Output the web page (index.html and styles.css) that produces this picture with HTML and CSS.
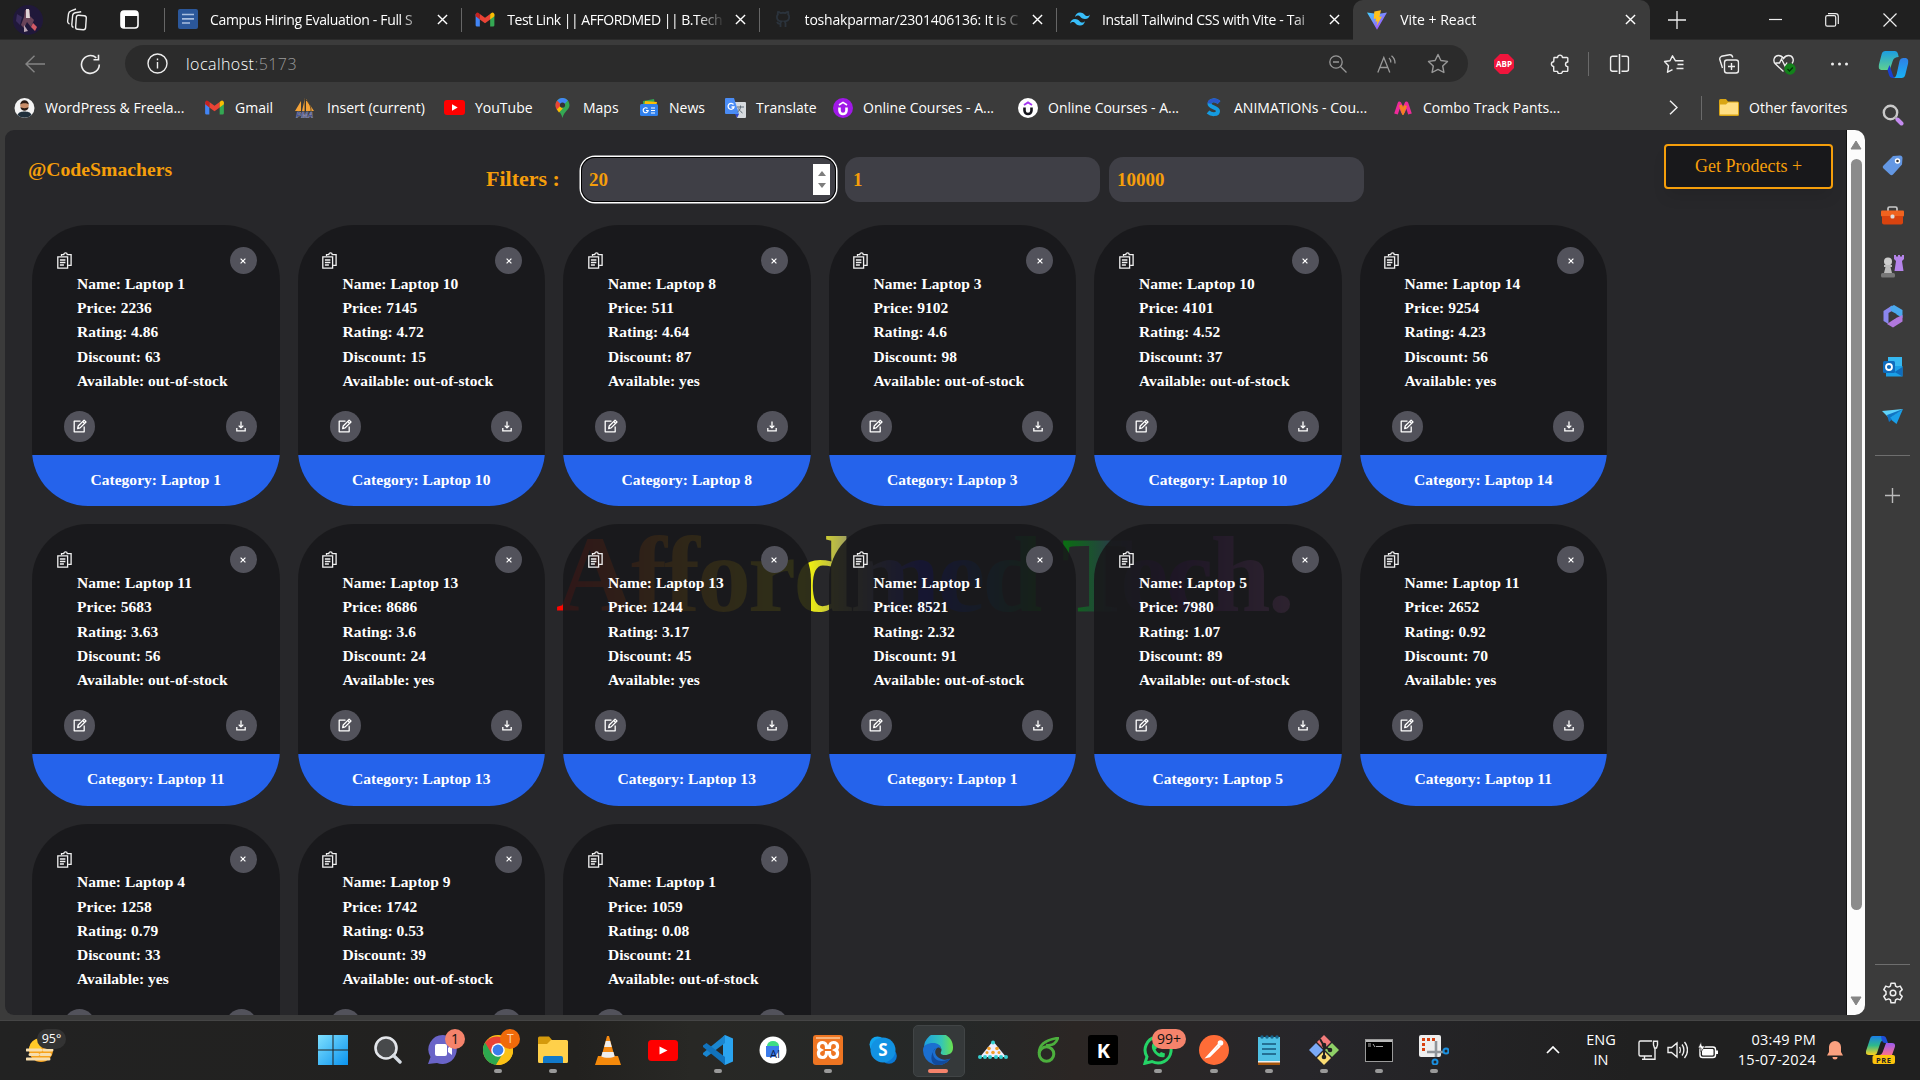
FILE: index.html
```html
<!DOCTYPE html>
<html lang="en">
<head>
<meta charset="utf-8">
<title>Vite + React</title>
<link rel="stylesheet" href="styles.css">
</head>
<body>
<svg class="defs" width="0" height="0">
  <defs>
    <linearGradient id="gVite" x1="0" y1="0" x2="1" y2="1"><stop offset="0" stop-color="#41d1ff"/><stop offset="1" stop-color="#bd34fe"/></linearGradient>
    <linearGradient id="gCop1" x1="0" y1="0" x2="0" y2="1"><stop offset="0" stop-color="#1b9de2"/><stop offset="1" stop-color="#5fd08f"/></linearGradient>
    <linearGradient id="gCop2" x1="0" y1="0" x2="0" y2="1"><stop offset="0" stop-color="#2f7fe6"/><stop offset="1" stop-color="#18b2f5"/></linearGradient>
    <linearGradient id="gWin" x1="0" y1="0" x2="1" y2="1"><stop offset="0" stop-color="#7fe0ff"/><stop offset="1" stop-color="#0a93ee"/></linearGradient>
    <linearGradient id="gEdge" x1="0" y1="0" x2="1" y2="0"><stop offset="0" stop-color="#1d9fe0"/><stop offset=".6" stop-color="#35c6b5"/><stop offset="1" stop-color="#6be34d"/></linearGradient>
    <linearGradient id="gRain" x1="0" y1="0" x2="0" y2="1"><stop offset="0" stop-color="#1a7fe8"/><stop offset=".5" stop-color="#2fb98a"/><stop offset="1" stop-color="#ffd21e"/></linearGradient>
    <linearGradient id="gPink" x1="0" y1="0" x2="0" y2="1"><stop offset="0" stop-color="#9a5bf0"/><stop offset="1" stop-color="#ff6f8a"/></linearGradient>
    <symbol id="x" viewBox="0 0 12 12"><path d="M1 1l10 10M11 1L1 11" fill="none" stroke="#fff" stroke-width="1.5"/></symbol>
    <symbol id="gmail" viewBox="0 0 20 16"><path d="M0 2v12a1.5 1.5 0 0 0 1.500 1.500H4.500V5z" fill="#4285f4"/><path d="M20 2v12a1.500 1.500 0 0 1-1.500 1.500H15.500V5z" fill="#34a853"/><path d="M4.500 8V2L10 6l5.500-4v6L10 12z" fill="#ea4335"/><path d="M0 2.500v2L4.500 8V2L3.200 1A2 2 0 0 0 0 2.500z" fill="#c5221f"/><path d="M20 2.500v2L15.500 8V2l1.300-1A2 2 0 0 1 20 2.500z" fill="#fbbc04"/></symbol>
    <symbol id="copy" viewBox="0 0 15 17"><g fill="none" stroke="#f1f1f1" stroke-width="1.300"><path d="M4.500 4V2.600h2.300a1.700 1.700 0 0 1 3.400 0h3.900v10.700h-3"/><path d="M.8 4.800h9.800v11.400H.8z"/><path d="M2.900 8h5.500M2.900 10.500h5.500M2.900 13h4"/></g></symbol>
    <symbol id="cx" viewBox="0 0 8 8"><path d="M1.600 1.600l4.800 4.800M6.400 1.600L1.600 6.400" fill="none" stroke="#fff" stroke-width="1.200"/></symbol>
    <symbol id="edit" viewBox="0 0 14 14"><g fill="none" stroke="#fff" stroke-width="1.300" stroke-linejoin="round"><path d="M7.500 2.200H1.200v10.600h10V7.500"/><path d="M4.700 9.500l.5-2.500 5.900-5.900 1.900 1.900-5.900 5.900z"/><path d="M9.700 2.500l1.900 1.900"/></g></symbol>
    <symbol id="down" viewBox="0 0 10 11"><g fill="none" stroke="#fff" stroke-width="1.300"><path d="M5 .5v6.300M2.700 4.600L5 6.900l2.300-2.300M.8 7v2.900h8.400V7"/></g></symbol>
    <symbol id="udemy" viewBox="0 0 20 20"><path d="M6.500 9.500v3a3.500 3.500 0 0 0 7 0v-3" fill="none" stroke="currentColor" stroke-width="2.600"/></symbol>
  </defs>
</svg>

<header class="tabs">
  <div class="tabs-lead">
    <svg width="30" height="30" viewBox="0 0 30 30"><circle cx="15" cy="15" r="15" fill="#20183a"/><path d="M12 5h5v6l4 4-3 7-4-5-3 6-3-3 3-8z" fill="#6a4459"/><path d="M13 4h3l1 9h-4z" fill="#dfd3d6"/><path d="M20 18l4 4-2 4-4-4z" fill="#d35a66"/><path d="M11 20l4 6-4 1z" fill="#b9a6b4"/><path d="M4 9l5 3-2 8-4-4z" fill="#3a2c5c"/></svg>
    <svg class="workspaces" width="22" height="24" viewBox="0 0 22 24" fill="none" stroke="#eee" stroke-width="1.400"><rect x="10" y="7.500" width="10" height="14" rx="2.200" transform="rotate(4 15 14)"/><path d="M7.500 19.500c-1.500-.5-1.800-1.300-1.700-2.700l.8-9c.2-2 1-2.700 2.600-3l6-1.100M3.500 16c-1.500-.5-2-1.300-1.900-2.700l.9-7.500c.2-2 1-2.500 2.600-3L10 1"/></svg>
    <svg width="19" height="19" viewBox="0 0 19 19"><rect x="1" y="1" width="17" height="17" rx="3" fill="none" stroke="#fff" stroke-width="1.600"/><path d="M1 4a3 3 0 0 1 3-3h11a3 3 0 0 1 3 3v2H1zM1 6h4v12H3a2 2 0 0 1-2-2z" fill="#fff"/></svg>
  </div>
  <div class="tab">
    <svg width="20" height="20" viewBox="0 0 20 20"><rect width="20" height="20" rx="2" fill="#2b579a"/><path d="M4 5.500h12M4 9.800h12M4 14h8" stroke="#a9bfe0" stroke-width="1.700"/></svg>
    <span class="tab-title">Campus Hiring Evaluation - Full S</span><svg class="tab-x"><use href="#x"/></svg>
  </div>
  <div class="tab">
    <svg width="19" height="15"><use href="#gmail"/></svg>
    <span class="tab-title t2">Test Link || AFFORDMED || B.Tech</span><svg class="tab-x"><use href="#x"/></svg>
  </div>
  <div class="tab">
    <svg width="20" height="20" viewBox="0 0 20 20"><path d="M7.500 18v-3.200c-2 .3-3-.8-3.500-1.800M12.500 18v-3.500c0-1-.3-1.500-.8-2 2.500-.3 4.500-1.200 4.500-4.500 0-1-.3-1.800-1-2.500.2-.6.200-1.600-.1-2.500-1 0-2 .6-2.700 1.100a9 9 0 0 0-4.800 0C7 3.600 5.900 3 5 3c-.4.900-.3 1.900-.1 2.500-.7.700-1 1.500-1 2.500 0 3.300 2 4.200 4.500 4.500-.4.400-.8 1-.9 1.800" fill="none" stroke="#2b333c" stroke-width="1.800"/></svg>
    <span class="tab-title t3">toshakparmar/2301406136: It is C</span><svg class="tab-x"><use href="#x"/></svg>
  </div>
  <div class="tab">
    <svg width="20" height="14" viewBox="0 0 20 14"><path d="M5 5C5.700 2 7.300.5 10 .5c4 0 4.500 3 6.500 3.500 1.300.3 2.500-.2 3.500-1.500-.7 3-2.300 4.500-5 4.500-4 0-4.500-3-6.500-3.500C7.200 3.200 6 3.700 5 5zM0 11.500C.7 8.500 2.300 7 5 7c4 0 4.500 3 6.500 3.500 1.300.3 2.500-.2 3.500-1.500-.7 3-2.300 4.500-5 4.500-4 0-4.500-3-6.500-3.500-1.300-.3-2.500.2-3.500 1.500z" fill="#38bdf8"/></svg>
    <span class="tab-title t4">Install Tailwind CSS with Vite - Tai</span><svg class="tab-x"><use href="#x"/></svg>
  </div>
  <div class="tab active">
    <svg width="20" height="20" viewBox="0 0 20 20"><path d="M0 2.500l10 17.200L20 2.500l-9 1.500z" fill="url(#gVite)"/><path d="M14 .3L7.300 1.600 6.800 9l2.300-.5-.6 3.200 2-.5-1 4.800L15 6.500l-2.600.5z" fill="#ffc21d"/></svg>
    <span class="tab-title">Vite + React</span><svg class="tab-x"><use href="#x"/></svg>
  </div>
  <div class="window-controls">
    <svg width="18" height="18" viewBox="0 0 18 18" stroke="#eee" stroke-width="1.300"><path d="M9 0v18M0 9h18"/></svg>
    <svg width="13" height="13" viewBox="0 0 13 13" stroke="#eee" stroke-width="1.200"><path d="M0 6.500h13"/></svg>
    <svg width="14" height="14" viewBox="0 0 14 14" fill="none" stroke="#eee" stroke-width="1.200"><rect x=".7" y="2.700" width="10" height="10.500" rx="1.500"/><path d="M3 .7h7.500a2.800 2.800 0 0 1 2.800 2.800V11"/></svg>
    <svg width="14" height="14" viewBox="0 0 14 14" stroke="#eee" stroke-width="1.200"><path d="M.5.500l13 13M13.500.500l-13 13"/></svg>
  </div>
</header>

<nav class="toolbar">
  <span class="slot"><svg width="20" height="18" viewBox="0 0 20 18" fill="none" stroke="#858585" stroke-width="1.400"><path d="M20 9H1M9.500.7L1 9l8.500 8.300"/></svg></span>
  <span class="slot"><svg width="21" height="21" viewBox="0 0 21 21" fill="none" stroke="#eee" stroke-width="1.600"><path d="M19.300 10.500a8.900 8.900 0 1 1-3-6.700M18.500.8v5h-5"/></svg></span>
  <div class="omnibox">
    <svg width="21" height="21" viewBox="0 0 21 21" fill="none" stroke="#eee" stroke-width="1.400"><circle cx="10.500" cy="10.500" r="9.500"/><path d="M10.500 9v6.500M10.500 5.500v1.800"/></svg>
    <span class="url">localhost<span class="port">:5173</span></span>
    <svg class="oi" width="18" height="18" viewBox="0 0 18 18" fill="none" stroke="#999" stroke-width="1.300"><circle cx="7" cy="7" r="6.200"/><path d="M11.500 11.500l6 6M4 7h6"/></svg>
    <svg class="oi" width="20" height="18" viewBox="0 0 20 18" fill="none" stroke="#999" stroke-width="1.300"><path d="M.8 17.500L6.800 2.500l6 15M3 12.500h7.600M12 3c1.300 1 1.800 2.500 1.800 4.500M14.500.8c2.500 2 3.600 4.500 3.500 7.700"/></svg>
    <svg class="oi" width="22" height="21" viewBox="0 0 22 21" fill="none" stroke="#999" stroke-width="1.400" stroke-linejoin="round"><path d="M11 1.500l2.900 6 6.600.9-4.800 4.600 1.200 6.500L11 16.400l-5.900 3.100L6.300 13 1.500 8.400l6.600-.9z"/></svg>
  </div>
  <span class="slot"><svg width="20" height="20" viewBox="0 0 20 20"><path d="M6 0h8l6 6v8l-6 6H6l-6-6V6z" fill="#f0153c"/><text class="abp" x="10" y="13.200" text-anchor="middle">ABP</text></svg></span>
  <span class="slot"><svg width="20" height="20" viewBox="0 0 20 20" fill="none" stroke="#eee" stroke-width="1.400" stroke-linejoin="round"><path d="M4 3.500h3.600a2.400 2.400 0 0 1 4.800 0H17a.8.800 0 0 1 .8.800V8a2.300 2.300 0 0 0 0 4.600v4a.8.800 0 0 1-.8.800h-4.600a2.400 2.400 0 0 1-4.800 0H4.500a.8.800 0 0 1-.8-.8v-4.200a2.300 2.300 0 0 1 0-4.600z"/></svg></span>
  <i class="vsep"></i>
  <span class="slot"><svg width="20" height="20" viewBox="0 0 20 20" fill="none" stroke="#eee" stroke-width="1.500"><path d="M8 2.200H3A2 2 0 0 0 1 4.200v11a2 2 0 0 0 2 2h5M12 2.200h5a2 2 0 0 1 2 2v11a2 2 0 0 1-2 2h-5M10 0v20"/></svg></span>
  <span class="slot"><svg width="21" height="19" viewBox="0 0 21 19" fill="none" stroke="#eee" stroke-width="1.400" stroke-linejoin="round"><path d="M20 13.500h-7M20 9.500h-6M20 5.800h-8l-3-5-2.500 5L1 6.500l4 4.200-1 6.500 5-2.600"/></svg></span>
  <span class="slot"><svg width="21" height="20" viewBox="0 0 21 20" fill="none" stroke="#eee" stroke-width="1.400"><rect x="6" y="6" width="14" height="13" rx="2.500"/><path d="M13 9v7M9.500 12.500h7M4 14L1.300 5.500C1 3.500 1.500 2.800 3 2.300l8-1.500c2-.3 2.800 1 3.300 2.700"/></svg></span>
  <span class="slot"><svg width="24" height="21" viewBox="0 0 24 21" fill="none" stroke="#eee" stroke-width="1.400"><path d="M11 17.500L3 10C0 7 1.500 1.500 6 1.500c2.500 0 4 1.500 5 3 1-1.500 2.500-3 5-3 4.500 0 6 5 3.500 8M3 9h4l2-4 3.500 7 2-3.500"/><circle cx="17.500" cy="15" r="5.700" fill="#13821b" stroke="none"/><path d="M15 15l2 2 3.300-3.500" stroke="#05330a"/></svg></span>
  <span class="slot"><svg width="18" height="4" viewBox="0 0 18 4" fill="#eee"><circle cx="2" cy="2" r="1.500"/><circle cx="9" cy="2" r="1.500"/><circle cx="16" cy="2" r="1.500"/></svg></span>
  <span class="slot"><svg width="30" height="27" viewBox="0 0 30 27"><path d="M7 0h9c2 0 3 1 3.500 3l.7 3c-3 0-5 1-6 4l-3 9H4c-3 0-4.500-2-3.700-5L3.200 3C3.700 1 5 0 7 0z" fill="url(#gCop1)"/><path d="M9 19l2-5 3 9c.5 2 1.500 4 3.500 4h-3c-2 0-3.500-1-4-3z" fill="#1a3fd0"/><path d="M23 27h-9c3 0 3.500-2 4.300-4.500L21 10c.6-2 2-3 4-3h1c3 0 4.500 2 3.700 5l-3 12c-.5 2-1.700 3-3.700 3z" fill="url(#gCop2)"/></svg></span>
</nav>

<div class="middle">
  <div class="window">
    <div class="bookmarks">
      <span class="bm"><svg width="21" height="20" viewBox="0 0 20 20"><circle cx="10" cy="10" r="10" fill="#f4f4f4"/><path d="M3 17c1-3 4-3.500 7-3.500s6 .5 7 3.500a10 10 0 0 1-14 0z" fill="#20303c"/><circle cx="10" cy="7.500" r="4.300" fill="#c98d68"/><path d="M5.700 6.500a4.300 4.300 0 0 1 8.600 0c-2-1.800-6.500-1.800-8.600 0zM6 9c1 1.500 7 1.500 8 0 0 5-8 5-8 0z" fill="#2b1b14"/></svg>WordPress &amp; Freela...</span>
      <span class="bm"><svg width="21" height="15"><use href="#gmail"/></svg>Gmail</span>
      <span class="bm wide"><svg width="21" height="20" viewBox="0 0 21 20"><path d="M1 13L7 3v10zM8 13L11 0v13zM12 13V1l8 12z" fill="#f5a338"/><path d="M11 1v12M12 2c4 4 5 7 5 11" stroke="#3a3020" stroke-width=".8" fill="none"/><text class="pma" x="10.500" y="19.500" text-anchor="middle">PMA</text></svg>Insert (current)</span>
      <span class="bm"><svg width="21" height="15" viewBox="0 0 21 15"><rect width="21" height="15" rx="3" fill="#f00"/><path d="M8 4.200v6.600l5.700-3.300z" fill="#fff"/></svg>YouTube</span>
      <span class="bm"><svg width="21" height="20" viewBox="0 0 21 20"><path d="M10.500 0a7 7 0 0 1 7 7c0 5-5.500 6-7 13-1.500-7-7-8-7-13a7 7 0 0 1 7-7z" fill="#34a853"/><path d="M3.500 7a7 7 0 0 1 1.700-4.600L10 7l-5 5c-1-1.500-1.500-3-1.500-5z" fill="#ea4335"/><path d="M5.200 2.400a7 7 0 0 1 10.600 0L10.500 8z" fill="#4285f4"/><path d="M4.800 11.500l3-3 3 2-3.800 4z" fill="#fbbc04"/><circle cx="10.500" cy="7" r="2.600" fill="#333"/></svg>Maps</span>
      <span class="bm"><svg width="20" height="18" viewBox="0 0 20 18"><path d="M4 2l11-2 1 6H4z" fill="#34a853"/><path d="M6 2l12 1-1 5H5z" fill="#fbbc04"/><rect x="1" y="5" width="18" height="12" rx="1.500" fill="#2f80ed"/><path d="M12 9h4M12 11.500h4M12 14h4" stroke="#fff"/><path d="M8.500 9.500a2.500 2.500 0 1 0 .7 2H7" stroke="#fff" stroke-width="1.200" fill="none"/></svg>News</span>
      <span class="bm"><svg width="21" height="20" viewBox="0 0 21 20"><path d="M8 4h12a1 1 0 0 1 1 1v14a1 1 0 0 1-1 1h-8z" fill="#d6dade"/><path d="M1 0h8l5 16H1a1 1 0 0 1-1-1V1a1 1 0 0 1 1-1z" fill="#4a8cf5"/><path d="M8.500 6.500A3 3 0 1 0 9 9H6.500" stroke="#fff" stroke-width="1.300" fill="none"/><path d="M12 9h7M15.500 7.500V9c0 3-3 5-3 5M13.500 10.500c1 2.500 4 4.500 4 4.500" stroke="#5d6b76" fill="none"/><path d="M10 16h4l-2 4z" fill="#3046c8"/></svg>Translate</span>
      <span class="bm"><svg width="20" height="20" viewBox="0 0 20 20" color="#fff"><circle cx="10" cy="10" r="10" fill="#a018e8"/><path d="M6 7l4-2.600L14 7" fill="none" stroke="#fff" stroke-width="1.600"/><use href="#udemy"/></svg>Online Courses - A...</span>
      <span class="bm"><svg width="20" height="20" viewBox="0 0 20 20" color="#15151c"><circle cx="10" cy="10" r="10" fill="#fff"/><path d="M6 7l4-2.600L14 7" fill="none" stroke="#a435f0" stroke-width="1.800"/><use href="#udemy"/></svg>Online Courses - A...</span>
      <span class="bm"><svg width="21" height="19" viewBox="0 0 21 19"><path d="M16 4.500C13 1.500 7 1.500 6.500 5.500S15 9 15 13s-6.500 4-10 1" fill="none" stroke="#159be0" stroke-width="4"/><path d="M16 4.500C13 1.500 7 1.500 6.500 5.500" fill="none" stroke="#2a56c8" stroke-width="4"/></svg>ANIMATIONs - Cou...</span>
      <span class="bm"><svg width="20" height="14" viewBox="0 0 20 14"><path d="M3 13L6.500 2.500 10 11l3.500-8.500L17 13" fill="none" stroke="#ee2a9a" stroke-width="3.800" stroke-linejoin="round"/><path d="M7.500 4L10 11l2.500-6.500" fill="none" stroke="#f58220" stroke-width="3.200"/></svg>Combo Track Pants...</span>
      <svg class="chev" width="9" height="15" viewBox="0 0 9 15"><path d="M1 .7l7 6.800-7 6.800" fill="none" stroke="#eee" stroke-width="1.500"/></svg>
      <i class="vsep"></i>
      <span class="bm other"><svg width="20" height="17" viewBox="0 0 20 17"><path d="M0 1.500A1.500 1.500 0 0 1 1.500 0H7l2 2.500h9.500A1.500 1.500 0 0 1 20 4v11.500a1.500 1.500 0 0 1-1.500 1.500h-17A1.500 1.500 0 0 1 0 15.500z" fill="#d9a514"/><path d="M1 5.500h6l2-2h10v12H1z" fill="#ffdf84"/></svg>Other favorites</span>
    </div>
    <div class="frame">
      <main class="page">
        <div class="hero">Affordmed Tech.</div>
        <header class="page-head">
          <h1 class="brand">@CodeSmachers</h1>
          <div class="filters">
            <span class="filters-label">Filters :</span>
            <div class="field focused">20<span class="spinner"><svg width="8" height="5" viewBox="0 0 8 5"><path d="M4 0l4 5H0z" fill="#7d7d7d"/></svg><svg width="8" height="5" viewBox="0 0 8 5"><path d="M4 5L0 0h8z" fill="#7d7d7d"/></svg></span></div>
            <div class="field">1</div>
            <div class="field">10000</div>
          </div>
          <button class="get">Get Prodects +</button>
        </header>
        <section class="cards">
          <article class="card"><div class="body"><div class="top"><svg class="copy"><use href="#copy"/></svg><span class="dot sm"><svg><use href="#cx"/></svg></span></div><ul><li>Name: Laptop 1</li><li>Price: 2236</li><li>Rating: 4.86</li><li>Discount: 63</li><li>Available: out-of-stock</li></ul><div class="acts"><span class="dot ed"><svg><use href="#edit"/></svg></span><span class="dot dl"><svg><use href="#down"/></svg></span></div></div><footer>Category: Laptop 1</footer></article>
          <article class="card"><div class="body"><div class="top"><svg class="copy"><use href="#copy"/></svg><span class="dot sm"><svg><use href="#cx"/></svg></span></div><ul><li>Name: Laptop 10</li><li>Price: 7145</li><li>Rating: 4.72</li><li>Discount: 15</li><li>Available: out-of-stock</li></ul><div class="acts"><span class="dot ed"><svg><use href="#edit"/></svg></span><span class="dot dl"><svg><use href="#down"/></svg></span></div></div><footer>Category: Laptop 10</footer></article>
          <article class="card"><div class="body"><div class="top"><svg class="copy"><use href="#copy"/></svg><span class="dot sm"><svg><use href="#cx"/></svg></span></div><ul><li>Name: Laptop 8</li><li>Price: 511</li><li>Rating: 4.64</li><li>Discount: 87</li><li>Available: yes</li></ul><div class="acts"><span class="dot ed"><svg><use href="#edit"/></svg></span><span class="dot dl"><svg><use href="#down"/></svg></span></div></div><footer>Category: Laptop 8</footer></article>
          <article class="card"><div class="body"><div class="top"><svg class="copy"><use href="#copy"/></svg><span class="dot sm"><svg><use href="#cx"/></svg></span></div><ul><li>Name: Laptop 3</li><li>Price: 9102</li><li>Rating: 4.6</li><li>Discount: 98</li><li>Available: out-of-stock</li></ul><div class="acts"><span class="dot ed"><svg><use href="#edit"/></svg></span><span class="dot dl"><svg><use href="#down"/></svg></span></div></div><footer>Category: Laptop 3</footer></article>
          <article class="card"><div class="body"><div class="top"><svg class="copy"><use href="#copy"/></svg><span class="dot sm"><svg><use href="#cx"/></svg></span></div><ul><li>Name: Laptop 10</li><li>Price: 4101</li><li>Rating: 4.52</li><li>Discount: 37</li><li>Available: out-of-stock</li></ul><div class="acts"><span class="dot ed"><svg><use href="#edit"/></svg></span><span class="dot dl"><svg><use href="#down"/></svg></span></div></div><footer>Category: Laptop 10</footer></article>
          <article class="card"><div class="body"><div class="top"><svg class="copy"><use href="#copy"/></svg><span class="dot sm"><svg><use href="#cx"/></svg></span></div><ul><li>Name: Laptop 14</li><li>Price: 9254</li><li>Rating: 4.23</li><li>Discount: 56</li><li>Available: yes</li></ul><div class="acts"><span class="dot ed"><svg><use href="#edit"/></svg></span><span class="dot dl"><svg><use href="#down"/></svg></span></div></div><footer>Category: Laptop 14</footer></article>
          <article class="card"><div class="body"><div class="top"><svg class="copy"><use href="#copy"/></svg><span class="dot sm"><svg><use href="#cx"/></svg></span></div><ul><li>Name: Laptop 11</li><li>Price: 5683</li><li>Rating: 3.63</li><li>Discount: 56</li><li>Available: out-of-stock</li></ul><div class="acts"><span class="dot ed"><svg><use href="#edit"/></svg></span><span class="dot dl"><svg><use href="#down"/></svg></span></div></div><footer>Category: Laptop 11</footer></article>
          <article class="card"><div class="body"><div class="top"><svg class="copy"><use href="#copy"/></svg><span class="dot sm"><svg><use href="#cx"/></svg></span></div><ul><li>Name: Laptop 13</li><li>Price: 8686</li><li>Rating: 3.6</li><li>Discount: 24</li><li>Available: yes</li></ul><div class="acts"><span class="dot ed"><svg><use href="#edit"/></svg></span><span class="dot dl"><svg><use href="#down"/></svg></span></div></div><footer>Category: Laptop 13</footer></article>
          <article class="card"><div class="body"><div class="top"><svg class="copy"><use href="#copy"/></svg><span class="dot sm"><svg><use href="#cx"/></svg></span></div><ul><li>Name: Laptop 13</li><li>Price: 1244</li><li>Rating: 3.17</li><li>Discount: 45</li><li>Available: yes</li></ul><div class="acts"><span class="dot ed"><svg><use href="#edit"/></svg></span><span class="dot dl"><svg><use href="#down"/></svg></span></div></div><footer>Category: Laptop 13</footer></article>
          <article class="card"><div class="body"><div class="top"><svg class="copy"><use href="#copy"/></svg><span class="dot sm"><svg><use href="#cx"/></svg></span></div><ul><li>Name: Laptop 1</li><li>Price: 8521</li><li>Rating: 2.32</li><li>Discount: 91</li><li>Available: out-of-stock</li></ul><div class="acts"><span class="dot ed"><svg><use href="#edit"/></svg></span><span class="dot dl"><svg><use href="#down"/></svg></span></div></div><footer>Category: Laptop 1</footer></article>
          <article class="card"><div class="body"><div class="top"><svg class="copy"><use href="#copy"/></svg><span class="dot sm"><svg><use href="#cx"/></svg></span></div><ul><li>Name: Laptop 5</li><li>Price: 7980</li><li>Rating: 1.07</li><li>Discount: 89</li><li>Available: out-of-stock</li></ul><div class="acts"><span class="dot ed"><svg><use href="#edit"/></svg></span><span class="dot dl"><svg><use href="#down"/></svg></span></div></div><footer>Category: Laptop 5</footer></article>
          <article class="card"><div class="body"><div class="top"><svg class="copy"><use href="#copy"/></svg><span class="dot sm"><svg><use href="#cx"/></svg></span></div><ul><li>Name: Laptop 11</li><li>Price: 2652</li><li>Rating: 0.92</li><li>Discount: 70</li><li>Available: yes</li></ul><div class="acts"><span class="dot ed"><svg><use href="#edit"/></svg></span><span class="dot dl"><svg><use href="#down"/></svg></span></div></div><footer>Category: Laptop 11</footer></article>
          <article class="card"><div class="body"><div class="top"><svg class="copy"><use href="#copy"/></svg><span class="dot sm"><svg><use href="#cx"/></svg></span></div><ul><li>Name: Laptop 4</li><li>Price: 1258</li><li>Rating: 0.79</li><li>Discount: 33</li><li>Available: yes</li></ul><div class="acts"><span class="dot ed"></span><span class="dot dl"></span></div></div></article>
          <article class="card"><div class="body"><div class="top"><svg class="copy"><use href="#copy"/></svg><span class="dot sm"><svg><use href="#cx"/></svg></span></div><ul><li>Name: Laptop 9</li><li>Price: 1742</li><li>Rating: 0.53</li><li>Discount: 39</li><li>Available: out-of-stock</li></ul><div class="acts"><span class="dot ed"></span><span class="dot dl"></span></div></div></article>
          <article class="card"><div class="body"><div class="top"><svg class="copy"><use href="#copy"/></svg><span class="dot sm"><svg><use href="#cx"/></svg></span></div><ul><li>Name: Laptop 1</li><li>Price: 1059</li><li>Rating: 0.08</li><li>Discount: 21</li><li>Available: out-of-stock</li></ul><div class="acts"><span class="dot ed"></span><span class="dot dl"></span></div></div></article>
        </section>
      </main>
      <div class="scrollbar">
        <svg width="12" height="10" viewBox="0 0 12 10"><path d="M6 1l5 8H1z" fill="#858585" stroke="#858585" stroke-linejoin="round"/></svg>
        <div class="thumb"></div>
        <svg width="12" height="10" viewBox="0 0 12 10"><path d="M6 9L1 1h10z" fill="#858585" stroke="#858585" stroke-linejoin="round"/></svg>
      </div>
    </div>
  </div>
  <aside class="sidebar">
    <span><svg width="22" height="22" viewBox="0 0 22 22" fill="none"><circle cx="8.500" cy="8.500" r="6.700" stroke="#c9c9c9" stroke-width="2.400"/><path d="M13 13l2.500 2.500" stroke="#aaa" stroke-width="2"/><path d="M15.500 15.500l4 4" stroke="#c48bf0" stroke-width="4" stroke-linecap="round"/></svg></span>
    <span><svg width="21" height="21" viewBox="0 0 21 21"><path d="M11 1l7-.5c1.500 0 2.500 1 2.500 2.500L20 9.500 11 19.500c-1 1-2 1-3 0l-6.500-6c-1-1-1-2 0-3z" fill="#6397e3"/><circle cx="15.500" cy="6" r="2" fill="#333" stroke="#fff" stroke-width="1.400"/></svg></span>
    <span><svg width="23" height="19" viewBox="0 0 23 19"><path d="M7 5V2.500c0-1 .5-1.500 1.500-1.500h6c1 0 1.500.5 1.500 1.500V5" fill="none" stroke="#c9c9c9" stroke-width="1.700"/><rect x="0" y="4.500" width="23" height="6" rx="1" fill="#f0631f"/><path d="M1 10h21v6.500a2 2 0 0 1-2 2H3a2 2 0 0 1-2-2z" fill="#d8430f"/><rect x="9.500" y="8.500" width="4" height="4" rx="1.500" fill="#ddd"/></svg></span>
    <span><svg width="23" height="23" viewBox="0 0 23 23"><path d="M13 0h2v1.500h2V0h2v1.500h2V0h2v4l-2 2 1.500 10h-9L15 6l-2-2z" fill="#b584ea"/><circle cx="7" cy="6.500" r="4" fill="#ccc"/><path d="M3 10h8v2H9.500l1.500 6H3l1.500-6H3z" fill="#bbb"/><rect x="0" y="18" width="14" height="4.500" rx="1.500" fill="#777"/></svg></span>
    <span><svg width="22" height="23" viewBox="0 0 22 23"><path d="M10 .5L1.500 6v10l5 3V8l5-3z" fill="#8a86ee"/><path d="M8 2l4-2 8.500 5v8l-6-3.500V9L9 6z" fill="#4aa9ee"/><path d="M20.500 10v6.500L11 22.500 5 19l9-6z" fill="#b178dd"/><circle cx="11" cy="11.300" r="3" fill="#3b3b3b"/></svg></span>
    <span><svg width="20" height="20" viewBox="0 0 20 20"><rect x="5" y="0" width="14" height="12" fill="#35b8f1"/><path d="M3 19.500V9h16.500v10.500z" fill="#1aa0e8"/><path d="M19.500 10l-8 5 8 4.500z" fill="#0f6cbd"/><rect x="0" y="4" width="12" height="12" rx="1.500" fill="#0f6cbd"/><circle cx="6" cy="10" r="3" fill="none" stroke="#fff" stroke-width="1.800"/></svg></span>
    <span><svg width="21" height="15" viewBox="0 0 21 15"><path d="M0 2L21 0 7 9z" fill="#5fd3fa"/><path d="M21 0L14.500 15 7 9z" fill="#1a9fe8"/><path d="M5 6l2 7 3-2.500L8 8.500 21 0z" fill="#0f74c4"/></svg></span>
    <i class="hsep"></i>
    <span class="plus"><svg width="15" height="15" viewBox="0 0 15 15" stroke="#bbb" stroke-width="1.400"><path d="M7.500 0v15M0 7.500h15"/></svg></span>
    <i class="hsep low"></i>
    <span class="gear"><svg width="22" height="22" viewBox="0 0 22 22" fill="none" stroke="#eee" stroke-width="1.500" stroke-linejoin="round"><path d="M9 1.200h4l.6 2.900 1.700 1 2.900-1 2 3.500-2.200 2v2.800l2.200 2-2 3.500-2.900-1-1.700 1-.6 2.900H9l-.6-2.900-1.700-1-2.900 1-2-3.500 2.200-2V9.600l-2.200-2 2-3.500 2.900 1 1.700-1z"/><circle cx="11" cy="11" r="2.800"/></svg></span>
  </aside>
</div>

<footer class="taskbar">
  <div class="weather"><svg width="28" height="28" viewBox="0 0 28 28"><circle cx="15" cy="14" r="12" fill="#f7a21b"/><path d="M15 2a12 12 0 0 0-12 12h12z" fill="#ffc928"/><path d="M1 14h14M18 14h8M4 18.500h8M15 18.500h9M1 23h22" stroke="#f7deae" stroke-width="3" stroke-linecap="round"/></svg><span class="temp">95°</span></div>
  <div class="apps">
    <span class="app"><svg width="30" height="30" viewBox="0 0 29 29"><path d="M0 0h14v14H0zM15 0h14v14H15zM0 15h14v14H0zM15 15h14v14H15z" fill="url(#gWin)"/></svg></span>
    <span class="app"><svg width="28" height="28" viewBox="0 0 28 28"><circle cx="12" cy="12" r="10.500" fill="#47494b" stroke="#e3e6ea" stroke-width="2.600"/><path d="M19.500 19.500l6.500 6.500" stroke="#d5dbe2" stroke-width="3.400" stroke-linecap="round"/></svg></span>
    <span class="app"><svg width="30" height="30" viewBox="0 0 30 30"><path d="M15 0a14.500 14.500 0 1 1-6 28L0 29l2.500-7A14.500 14.500 0 0 1 15 0z" fill="#6a64c8"/><rect x="7" y="9" width="12" height="12" rx="2" fill="#fff"/><path d="M20 13l4-3v10l-4-3z" fill="#fff"/></svg><b class="badge">1</b></span>
    <span class="app run"><svg width="30" height="30" viewBox="0 0 30 30"><circle cx="15" cy="15" r="15" fill="#fbc116"/><path d="M15 15L2 7.500a15 15 0 0 0 11 22.400l6-10z" fill="#2da94f"/><path d="M15 15H29a15 15 0 0 0-27-7.500l6.500 11z" fill="#e94235"/><path d="M15 8h13.300A15 15 0 0 1 13 29.900l7-11z" fill="#fbc116"/><circle cx="15" cy="15" r="6.800" fill="#fff"/><circle cx="15" cy="15" r="5.400" fill="#3b7de9"/></svg><b class="badge t">T</b></span>
    <span class="app run"><svg width="30" height="28" viewBox="0 0 30 28"><path d="M0 2a1.500 1.500 0 0 1 1.500-1.500H11L14 4v6H0z" fill="#d49a0c"/><path d="M0 8h9l4-4h15.500A1.500 1.500 0 0 1 30 5.500v20a1.500 1.500 0 0 1-1.500 1.500h-27A1.500 1.500 0 0 1 0 25.500z" fill="#ffd04a"/><path d="M5 27v-5a2 2 0 0 1 2-2h16a2 2 0 0 1 2 2v5z" fill="#1179c9"/></svg></span>
    <span class="app"><svg width="26" height="29" viewBox="0 0 26 29"><path d="M3 20h20l3 9H0z" fill="#f5890a"/><path d="M12 0h2l6 22c-2 2.500-12 2.500-14 0z" fill="#f58a12"/><path d="M10.800 5h4.400l1.600 6H9.200zM7.500 16h11l1.200 4.500c-3 1.800-10.400 1.800-13.400 0z" fill="#eee"/></svg></span>
    <span class="app"><svg width="30" height="21" viewBox="0 0 30 21"><rect width="30" height="21" rx="3.500" fill="#f00"/><path d="M11.500 6.500v8l8-4z" fill="#fff"/></svg></span>
    <span class="app run"><svg width="30" height="30" viewBox="0 0 30 30"><path d="M22 0l8 3.500v23L22 30 20 28V2z" fill="#2aa4f0"/><path d="M22 0v8L3.500 22 0 19.500 0 18z" fill="#1a86d0"/><path d="M22 30v-8L3.500 8 0 10.500V12z" fill="#1173bd"/></svg></span>
    <span class="app"><svg width="28" height="28" viewBox="0 0 28 28"><circle cx="14" cy="14" r="13.500" fill="#fff"/><path d="M8 10a6 5 0 0 1 12 0z" fill="#3ddc84"/><path d="M7 10h13v5l-4 6H8a1 1 0 0 1-1-1z" fill="#3b7bea"/><text class="ai" x="16" y="21.500" text-anchor="middle">AI</text></svg></span>
    <span class="app run"><svg width="30" height="30" viewBox="0 0 30 30"><rect width="30" height="30" rx="3" fill="#ee7522"/><path d="M3 2h24v2H3z" fill="#f8b37c"/><path d="M9.500 7.500c3 0 4 2 4 5h3c0-3 1-5 4-5 5 0 5 6 2 7.500 3 1.500 3 7.500-2 7.500-3 0-4-2-4-5h-3c0 3-1 5-4 5-5 0-5-6-2-7.500-3-1.500-3-7.500 2-7.500z" fill="none" stroke="#fff" stroke-width="3.200"/></svg></span>
    <span class="app"><svg width="28" height="28" viewBox="0 0 28 28"><circle cx="8.500" cy="8.500" r="8" fill="#12a5ee"/><circle cx="20" cy="20" r="7.800" fill="#0b78d4"/><circle cx="14" cy="14" r="12.500" fill="#1292e2"/><text class="sk" x="14" y="20" text-anchor="middle">S</text></svg></span>
    <span class="app on"><svg width="30" height="30" viewBox="0 0 30 30"><path d="M1 12A14.500 14.500 0 0 1 30 13c0 5-4 7-8 7-3 0-5-1-4-3 2-4-2-8-7-8-4 0-8 2-10 3z" fill="url(#gEdge)"/><path d="M0 15c0-5 5-7 10-7 5 0 8 2.500 8 6-1-1.500-3-2-4-1-4 4-1 10 6 11.500 3 .5 5 0 7.500-1A15 15 0 0 1 0 15z" fill="#1b6fd0"/><path d="M10 18c0 6 6 10 14 7l3.500-1.500A15 15 0 0 1 12 29.700C7 27 7 19 13 13c-2 1-3 3-3 5z" fill="#114a9b"/></svg></span>
    <span class="app"><svg width="30" height="20" viewBox="0 0 30 20"><path d="M15 1l13 16H2z" fill="#eef"/><g fill="#35cfd0"><circle cx="15" cy="2.500" r="2"/><circle cx="2" cy="17" r="2"/><circle cx="7" cy="17" r="2"/><circle cx="12" cy="17" r="2"/><circle cx="18" cy="17" r="2"/><circle cx="23" cy="17" r="2"/><circle cx="28" cy="17" r="2"/></g><g fill="#f3a02c"><circle cx="11" cy="8.500" r="1.800"/><circle cx="19" cy="8.500" r="1.800"/><circle cx="15" cy="12.500" r="1.800"/><circle cx="9" cy="12.500" r="1.500"/><circle cx="21" cy="12.500" r="1.500"/></g></svg></span>
    <span class="app"><svg width="22" height="26" viewBox="0 0 22 26"><circle cx="9.500" cy="17" r="7.300" fill="none" stroke="#4caf3d" stroke-width="3"/><path d="M2 16C2 9 7 3 21 1c-2 6-6 8-12 7" fill="none" stroke="#4caf3d" stroke-width="2.600"/></svg></span>
    <span class="app"><svg width="30" height="30" viewBox="0 0 30 30"><rect width="30" height="30" rx="3" fill="#000"/><text class="k" x="15.500" y="23" text-anchor="middle">K</text></svg></span>
    <span class="app run"><svg width="30" height="30" viewBox="0 0 30 30"><path d="M2 28.300l2-6.500a13 13 0 1 1 5 4.700z" fill="none" stroke="#25d366" stroke-width="3"/><path d="M10 8l3 1 1 4-1.500 1.500c1 2 2 3 4 4L18 17l4 1.500-.5 3.500c-6 2-14-6-12.500-12z" fill="#25d366"/></svg><b class="badge wide">99+</b></span>
    <span class="app run"><svg width="30" height="30" viewBox="0 0 30 30"><circle cx="15" cy="15" r="15" fill="#ff6c37"/><path d="M8 22L19 10l1.500 1.500-10 10z" fill="none" stroke="#fff" stroke-width="1.800"/><circle cx="21.500" cy="8" r="2.800" fill="#fff"/></svg></span>
    <span class="app run"><svg width="22" height="30" viewBox="0 0 22 30"><path d="M0 26h22v4H0z" fill="#a5550c"/><path d="M0 2h22v25H0z" fill="#4fc0e4"/><path d="M0 26h22v1.500H0z" fill="#eee"/><path d="M4 9h14M4 14h14M4 19h14" stroke="#17557a" stroke-width="1.700"/><g fill="#17668e"><circle cx="4" cy="2" r="1.700"/><circle cx="9" cy="2" r="1.700"/><circle cx="14" cy="2" r="1.700"/><circle cx="19" cy="2" r="1.700"/></g></svg></span>
    <span class="app run"><svg width="30" height="30" viewBox="0 0 30 30"><path d="M15 0l7 7-7 7-7-7z" fill="#f27b7b"/><path d="M7 8l7 7-7 7-7-7z" fill="#7aaaf7"/><path d="M23 8l7 7-7 7-7-7z" fill="#8fd067"/><path d="M15 16l7 7-7 7-7-7z" fill="#fbdc73"/><path d="M11 4l4 7v12M15 11l6 4" stroke="#222" stroke-width="2" fill="none"/><g fill="#222"><circle cx="15" cy="10" r="2.300"/><circle cx="21" cy="15" r="2.300"/><circle cx="15" cy="22" r="2.300"/></g></svg></span>
    <span class="app run"><svg width="28" height="23" viewBox="0 0 28 23"><rect x=".5" y=".5" width="27" height="22" fill="#000" stroke="#9a9a9a"/><path d="M1 1h26v2H1z" fill="#bbb"/><path d="M3 5h3M3 7h3M8 5l2 3M11 7.500h7" stroke="#aaa" stroke-width="1"/></svg></span>
    <span class="app run"><svg width="30" height="30" viewBox="0 0 30 30"><rect width="22" height="22" rx="2" fill="#eee"/><path d="M4.500 16V4.500H16" fill="none" stroke="#d8400e" stroke-width="3" stroke-dasharray="3 2"/><path d="M17 6v16M8 17h16" stroke="#8f9499" stroke-width="2.600"/><circle cx="27" cy="16" r="2.500" fill="none" stroke="#1a8fdf" stroke-width="2"/><circle cx="16" cy="27" r="2.500" fill="none" stroke="#1a8fdf" stroke-width="2"/></svg></span>
  </div>
  <div class="tray">
    <svg width="14" height="8" viewBox="0 0 14 8"><path d="M1 7l6-6 6 6" fill="none" stroke="#fff" stroke-width="1.700"/></svg>
    <span class="lang">ENG<br>IN</span>
    <svg class="net" width="21" height="20" viewBox="0 0 21 20" fill="none" stroke="#eee" stroke-width="1.400"><path d="M14 1H2.500A1.500 1.500 0 0 0 1 2.500v12A1.500 1.500 0 0 0 2.500 16H14M4 19.300h13V8M6.500 16v3M15.500 1.200h4V5l-1 3h-2l-1-3z"/></svg>
    <svg class="vol" width="21" height="18" viewBox="0 0 21 18" fill="none" stroke="#eee" stroke-width="1.400"><path d="M1 6.500h3.500L10 2v14l-5.500-4.500H1zM12.500 6c1 1.500 1 4.500 0 6M15 3.500c2.500 3 2.500 8 0 11M17.500 1c4 4.500 4 11.500 0 16"/></svg>
    <svg class="bat" width="20" height="17" viewBox="0 0 20 17"><rect x="2" y="5" width="15.500" height="10.500" rx="2.500" fill="none" stroke="#fff" stroke-width="1.400"/><rect x="4" y="7" width="11.500" height="6.500" rx="1" fill="#fff"/><path d="M18 8.500h2v3.500h-2z" fill="#fff"/><path d="M3 0L0 6h3v4l4-6H4z" fill="#fff" stroke="#222" stroke-width=".7"/></svg>
    <span class="clock">03:49 PM<br>15-07-2024</span>
    <svg class="bell" width="16" height="19" viewBox="0 0 16 19" fill="#fba17f"><path d="M8 0a6 6 0 0 1 6 6v5l2 3.500H0L2 11V6a6 6 0 0 1 6-6zM5.500 16h5a2.500 2.500 0 0 1-5 0z"/></svg>
    <svg class="cop" width="29" height="28" viewBox="0 0 29 28"><path d="M7 0h10l2 4c-3 0-4 1-5 4l-3 9c-1 2-2 2-4 2H3c-3 0-3.500-2-3-4L4 3c.6-2 1.500-3 3-3z" fill="url(#gRain)"/><path d="M15 0h2c2 0 3 1 3.500 3L22 7h-3c-2 0-3-2-3.500-4z" fill="#1d4fd8"/><path d="M20 7h6c3 0 3.500 2 2.700 4.500L26 19H13c2 0 3-1 3.700-3z" fill="url(#gPink)"/><rect x="6.500" y="19" width="22.500" height="9" rx="2" fill="#fdc40c"/><text class="pre" x="17.800" y="26.500" text-anchor="middle">PRE</text></svg>
  </div>
</footer>
</body>
</html>
```
FILE: styles.css
```css
* { box-sizing: border-box; }
body {
  margin: 0; width: 1920px; height: 1080px; overflow: hidden;
  display: grid; grid-template-rows: 40px 48px 932px 60px;
  background: #3b3b3b; color: #fff;
  font-family: "Open Sans", "Noto Sans", sans-serif; font-size: 14px;
}
svg { flex: none; display: block; }
.defs { position: absolute; }

/* tab strip */
.tabs { display: flex; background: #202020; border-bottom: 1px solid #2b2b2b; }
.tabs-lead { width: 164px; padding: 0 25px 0 13px; display: flex; align-items: center; justify-content: space-between; }
.workspaces { margin-right: 9px; }
.tab { width: 297.3px; display: flex; align-items: center; padding: 0 13px 1px 14px; position: relative; white-space: nowrap; }
.tab > svg:first-child { width: 20px; }
.tab::before { content: ""; position: absolute; left: 0; top: 8px; height: 24px; width: 1px; background: #666; }
.tab-title { width: 221px; margin-left: 12px; letter-spacing: -.35px; -webkit-mask-image: linear-gradient(90deg, #000 190px, transparent 218px); mask-image: linear-gradient(90deg, #000 190px, transparent 218px); }
.t2 { letter-spacing: -.48px; }
.t3 { letter-spacing: -.2px; }
.tab-x { width: 11px; height: 11px; margin-left: auto; }
.active { background: #3b3b3b; border-radius: 10px 10px 0 0; height: 40px; padding-right: 14px; }
.active .tab-title { margin-left: 13px; letter-spacing: 0; }
.active::before { display: none; }
.window-controls { flex: 1; display: grid; grid-template-columns: 101px 56px 58px auto; align-items: center; padding-left: 18px; }

/* toolbar */
.toolbar { display: grid; grid-template-columns: 56px 55px 1343px 56px 56px 2px 55px 55px 55px 55px 55px 53px; padding-left: 7px; padding-top: 5px; height: 43px; }
.toolbar > .omnibox { margin-left: 7px; margin-right: -7px; }
.toolbar > .omnibox ~ * { transform: translateX(15px); }
.toolbar > .vsep ~ .slot { transform: translateX(16.500px); }
.slot { display: flex; align-items: center; justify-content: center; }
.omnibox { height: 37px; border-radius: 19px; background: #2b2b2b; display: flex; align-items: center; padding: 0 19px 0 22px; }
.url { margin: 0 auto 0 18px; font-size: 16px; font-weight: 300; letter-spacing: .45px; }
.port { color: #9a9a9a; }
.oi { margin-left: 30px; }
.vsep { width: 1px; height: 24px; background: #6a6a6a; align-self: center; }
.abp { font: bold 8px "Open Sans", sans-serif; fill: #fff; }

/* middle */
.middle { display: grid; grid-template-columns: 1865px 55px; }
.window { display: grid; grid-template-rows: 42px 885px; }
.bookmarks { display: grid; grid-template-columns: 190px 90px 150px 108px 87px 86px 108px 185px 185px 190px 276px 32px 18px auto; align-items: center; padding: 0 0 3px 14px; white-space: nowrap; }
.bm { display: flex; align-items: center; gap: 10px; }
.bm.wide { gap: 12px; }
.pma { font: italic bold 8px "Open Sans", sans-serif; fill: #2b3a8c; stroke: #aab; stroke-width: .4; }
.frame { display: grid; grid-template-columns: 1841px 19px; padding-left: 5px; }
.page { position: relative; overflow: hidden; height: 885px; background: #27272a; border-radius: 9px 0 0 9px; font-family: "Liberation Serif", serif; font-weight: 700; isolation: isolate; }
.hero {
  position: absolute; z-index: -1; left: 551px; top: 383px; font-size: 108px; line-height: 124px; letter-spacing: -2.950px; white-space: nowrap;
  background: linear-gradient(90deg, red, orange, yellow, blue, green, indigo, violet);
  -webkit-background-clip: text; background-clip: text; color: transparent;
}
.page-head { display: grid; grid-template-columns: 458px 1fr 169px; align-items: start; height: 95px; padding: 14px 13px 0 23px; color: #f59e0b; }
.brand { margin: 13px 0 0; font-size: 19.700px; line-height: 24px; }
.filters { display: flex; align-items: center; gap: 9px; padding-top: 13px; }
.filters-label { width: 86px; font-size: 22px; line-height: 24px; padding-bottom: 2px; }
.field { width: 255px; height: 45px; border-radius: 14px; background: #3f3f46; font-size: 19px; display: flex; align-items: center; justify-content: space-between; padding: 0 6px 0 8px; }
.focused { box-shadow: inset 0 0 0 1px #000, 0 0 0 1.500px #fff; }
.spinner { width: 17px; height: 31px; background: #fff; display: flex; flex-direction: column; align-items: center; justify-content: space-evenly; }
.get { height: 45px; border: 2px solid #f59e0b; border-radius: 4px; background: #18181b; color: #f59e0b; font: 18px "Liberation Serif", serif; box-shadow: 0 10px 15px -3px rgba(0,0,0,.1); }
.cards { display: grid; grid-template-columns: repeat(6, 247.500px); gap: 18px; padding-left: 27px; }
.card { height: 281.300px; border-radius: 56px; overflow: hidden; background: rgba(24,24,27,.9); font-size: 15.500px; letter-spacing: .03px; }
.body { height: 230px; padding: 22px 23px 0 24.500px; }
.top { display: flex; justify-content: space-between; align-items: center; height: 27px; }
.copy { width: 15px; height: 17px; }
.dot { width: 31px; height: 31px; border-radius: 50%; background: #52525b; display: flex; align-items: center; justify-content: center; }
.sm { width: 27px; height: 27px; }
.sm svg { width: 8px; height: 8px; }
.ed svg { width: 14px; height: 14px; }
.dl svg { width: 10px; height: 11px; }
.card ul { list-style: none; margin: -2.300px 0 0; padding: 0 0 0 20.500px; line-height: 24.300px; white-space: nowrap; }
.acts { display: flex; justify-content: space-between; margin-top: 17.400px; padding-left: 7.500px; }
.card footer { height: 51.300px; background: #2563eb; text-align: center; line-height: 49px; }
.scrollbar { height: 885px; background: #fcfcfc; border-left: 1px solid #111; border-radius: 0 10px 10px 0; display: flex; flex-direction: column; align-items: center; padding: 10px 0 9px; }
.thumb { width: 11px; height: 751px; margin: 9px 0 auto; border-radius: 6px; background: #8b8b8b; }

/* sidebar */
.sidebar { display: flex; flex-direction: column; align-items: center; padding-top: 2px; }
.sidebar span { height: 50.300px; width: 55px; display: flex; align-items: center; justify-content: center; }
.hsep { width: 35px; height: 1px; background: #6e6e6e; margin-top: 13px; }
.sidebar .plus { height: 78px; }
.hsep.low { margin-top: auto; }
.sidebar .gear { height: 55px; }

/* taskbar */
.taskbar { display: grid; grid-template-columns: 304px 1fr 380px; background: linear-gradient(90deg, #222 0, #22211f 30%, #282825 36%, #252828 50%, #2b2624 56%, #27262a 68%, #202020 85%); border-top: 1px solid #454545; }
.weather { position: relative; padding: 15px 0 0 26px; }
.temp { position: absolute; left: 37px; top: 8px; height: 20px; width: 29px; border-radius: 10px; background: #333; font-size: 12.500px; line-height: 20px; text-align: center; }
.apps { display: flex; padding-left: 1px; }
.app { width: 55.070px; height: 58px; position: relative; display: flex; align-items: center; justify-content: center; }
.run::after { content: ""; position: absolute; bottom: 6px; left: 23.500px; width: 8px; height: 4px; border-radius: 2px; background: #999; }
.on::before { content: ""; position: absolute; left: 2.500px; top: 4px; width: 50px; height: 50px; border: 1px solid #414546; border-radius: 5px; background: #35393a; }
.on svg { position: relative; }
.on::after { content: ""; position: absolute; bottom: 6px; left: 17.500px; width: 20px; height: 4px; border-radius: 2px; background: #f5836b; }
.badge { position: absolute; left: 30px; top: 8px; min-width: 20px; height: 20px; border-radius: 10px; background: #f5836b; color: #111; font-weight: 400; font-size: 14px; line-height: 20px; text-align: center; }
.badge.t { background: #f06a0a; color: #fbd3b0; font-size: 12px; }
.badge.wide { left: 21px; width: 34px; }
.ai { font: 11px "Open Sans", sans-serif; fill: #0b1e4a; }
.sk { font: bold 17px "Open Sans", sans-serif; fill: #fff; }
.k { font: bold 20px "Open Sans", sans-serif; fill: #fff; }
.pre { font: bold 7.500px "Open Sans", sans-serif; fill: #222; letter-spacing: .5px; }
.tray { display: flex; align-items: center; height: 58px; padding-left: 6px; line-height: 20px; font-size: 14.500px; }
.lang { width: 40px; margin-left: 21px; text-align: center; }
.net { margin-left: 17px; }
.vol { margin-left: 8px; }
.bat { margin-left: 10px; }
.clock { width: 98px; text-align: right; letter-spacing: .25px; }
.bell { margin-left: 11px; }
.cop { margin-left: 23px; }
```
